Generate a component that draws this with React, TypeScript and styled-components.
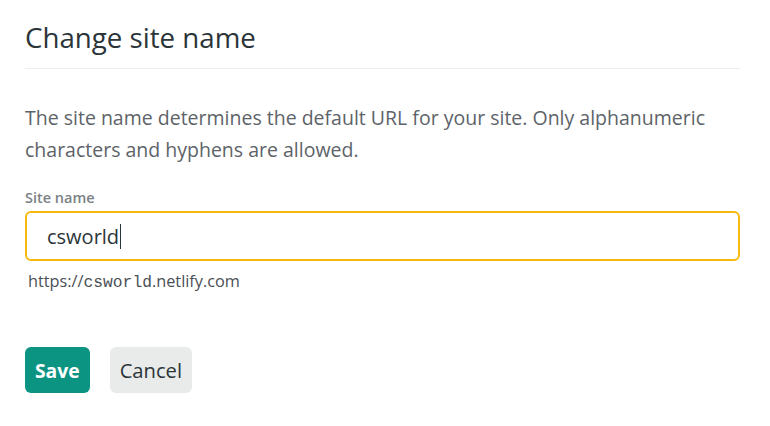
import React from "react";
import styled, { createGlobalStyle } from "styled-components";

const Global = createGlobalStyle`
  html, body { margin: 0; padding: 0; background: #ffffff; }
  body { font-family: "Open Sans", "Noto Sans", sans-serif; }
`;

const Page = styled.div`
  width: 770px;
  height: 426px;
  box-sizing: border-box;
  padding: 19px 30px 0 25px;
  display: flex;
  flex-direction: column;
`;

const Header = styled.div`
  border-bottom: 1px solid #eef0f0;
  padding-bottom: 13px;
`;

const Title = styled.h1`
  margin: 0;
  font-size: 27.7px;
  font-weight: 400;
  line-height: 36px;
  color: #2b3539;
`;

const Description = styled.p`
  margin: 33px 0 0;
  font-size: 19.5px;
  line-height: 32px;
  color: #5d6368;
  white-space: nowrap;
`;

const Label = styled.label`
  margin-top: 23px;
  font-size: 14.5px;
  font-weight: 600;
  line-height: 18px;
  color: #7b8185;
`;

const InputBox = styled.div`
  margin-top: 4px;
  height: 50px;
  box-sizing: border-box;
  border: 2px solid #f6b90f;
  border-radius: 6px;
  display: flex;
  align-items: center;
  padding-left: 20px;
  font-size: 20px;
  color: #2b3539;
`;

const Caret = styled.span`
  display: inline-block;
  width: 1px;
  height: 25px;
  background: #2b3539;
  margin-left: 1px;
`;

const Hint = styled.div`
  margin-top: 9px;
  padding-left: 3px;
  font-size: 16.3px;
  line-height: 22px;
  color: #4a5055;
`;

const Mono = styled.span`
  font-family: "Liberation Mono", "DejaVu Sans Mono", monospace;
  font-size: 16.3px;
`;

const Actions = styled.div`
  margin-top: 53px;
  display: flex;
  gap: 20px;
`;

const Button = styled.button<{ $primary?: boolean }>`
  height: 46px;
  box-sizing: border-box;
  border: none;
  border-radius: 6px;
  padding: 0 10px;
  font-family: "Open Sans", "Noto Sans", sans-serif;
  font-size: ${(p) => (p.$primary ? "19.3px" : "20.2px")};
  font-weight: ${(p) => (p.$primary ? 700 : 400)};
  background: ${(p) => (p.$primary ? "#0c9483" : "#e9ebeb")};
  color: ${(p) => (p.$primary ? "#ffffff" : "#2b3539")};
  cursor: pointer;
`;

export default function App() {
  return (
    <>
      <Global />
      <Page>
        <Header>
          <Title>Change site name</Title>
        </Header>
        <Description>
          The site name determines the default URL for your site. Only alphanumeric
          <br />
          characters and hyphens are allowed.
        </Description>
        <Label>Site name</Label>
        <InputBox>
          csworld<Caret />
        </InputBox>
        <Hint>
          https://<Mono>csworld</Mono>.netlify.com
        </Hint>
        <Actions>
          <Button $primary>Save</Button>
          <Button>Cancel</Button>
        </Actions>
      </Page>
    </>
  );
}
